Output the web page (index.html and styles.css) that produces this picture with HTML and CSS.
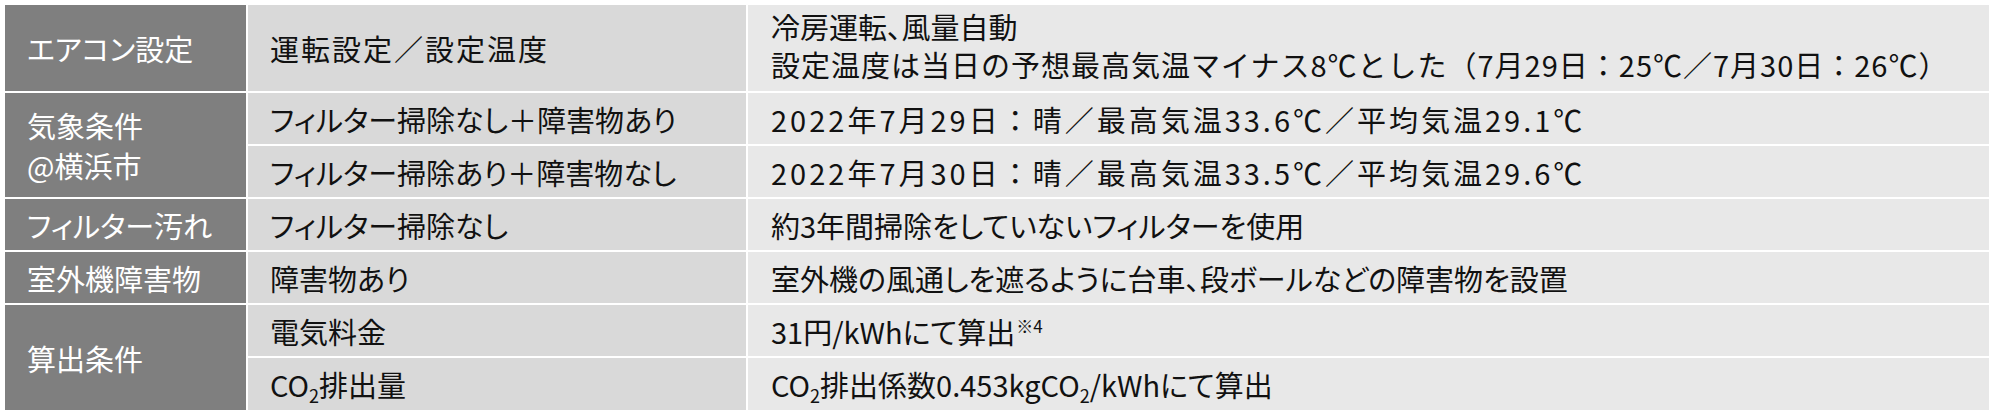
FILE: index.html
```html
<!DOCTYPE html>
<html lang="ja">
<head>
<meta charset="utf-8">
<link rel="stylesheet" href="styles.css">
</head>
<body>
<div class="table">
  <div class="c1 r1"><span>エアコン設定</span></div>
  <div class="c2 r1 fw ls2"><span>運転設定／設定温度</span></div>
  <div class="c3 r1 multi"><span>冷房運転、風量自動</span><span class="fw ls1">設定温度は当日の予想最高気温マイナス8℃とした（7月29日：25℃／7月30日：26℃）</span></div>

  <div class="c1 span2 lines"><span>気象条件</span><span>@横浜市</span></div>
  <div class="c2"><span>フィルター掃除なし＋障害物あり</span></div>
  <div class="c3 fw ls3"><span>2022年7月29日：晴／最高気温33.6℃／平均気温29.1℃</span></div>
  <div class="c2"><span>フィルター掃除あり＋障害物なし</span></div>
  <div class="c3 fw ls3"><span>2022年7月30日：晴／最高気温33.5℃／平均気温29.6℃</span></div>

  <div class="c1"><span>フィルター汚れ</span></div>
  <div class="c2"><span>フィルター掃除なし</span></div>
  <div class="c3"><span>約3年間掃除をしていないフィルターを使用</span></div>

  <div class="c1"><span>室外機障害物</span></div>
  <div class="c2"><span>障害物あり</span></div>
  <div class="c3"><span>室外機の風通しを遮るように台車、段ボールなどの障害物を設置</span></div>

  <div class="c1 span2"><span>算出条件</span></div>
  <div class="c2"><span>電気料金</span></div>
  <div class="c3"><span>31円/kWhにて算出<sup class="note">※4</sup></span></div>
  <div class="c2"><span>CO<sub class="sub">2</sub>排出量</span></div>
  <div class="c3"><span>CO<sub class="sub">2</sub>排出係数0.453kgCO<sub class="sub">2</sub>/kWhにて算出</span></div>
</div>
</body>
</html>
```
FILE: styles.css
```css
html, body {
  margin: 0;
  padding: 0;
  background: #ffffff;
}
body {
  padding: 5px 2px 0 5px;
  font-family: "Noto Sans CJK JP", "Noto Sans", sans-serif;
  font-feature-settings: "palt";
}
.table {
  display: grid;
  grid-template-columns: 241px 498px 1fr;
  grid-template-rows: 86px 51px 51px 51px 51px 51px 52px;
  gap: 2px;
  font-size: 29px;
  line-height: 34px;
}
.table > div {
  display: flex;
  align-items: center;
  white-space: nowrap;
}
.fw {
  font-feature-settings: normal;
}
.ls1 {
  letter-spacing: 1px;
}
.ls2 {
  letter-spacing: 2px;
}
.ls3 {
  letter-spacing: 3px;
}
.c1 {
  background: #7f7f7f;
  color: #ffffff;
  padding-left: 22px;
}
.c2 {
  background: #d9d9d9;
  color: #111111;
  padding-left: 22px;
}
.c3 {
  background: #e8e8e8;
  color: #111111;
  padding-left: 23px;
}
.span2 {
  grid-row: span 2;
}
.table > .multi,
.table > .lines {
  flex-direction: column;
  align-items: flex-start;
  justify-content: center;
  gap: 4px;
}
.table > .lines {
  gap: 6px;
}
.multi {
  padding-bottom: 6px;
}
.sub {
  font-size: 18px;
  line-height: 0;
  vertical-align: -6px;
}
.note {
  font-size: 17px;
  line-height: 0;
  vertical-align: 11px;
  margin-left: 1px;
}
```
